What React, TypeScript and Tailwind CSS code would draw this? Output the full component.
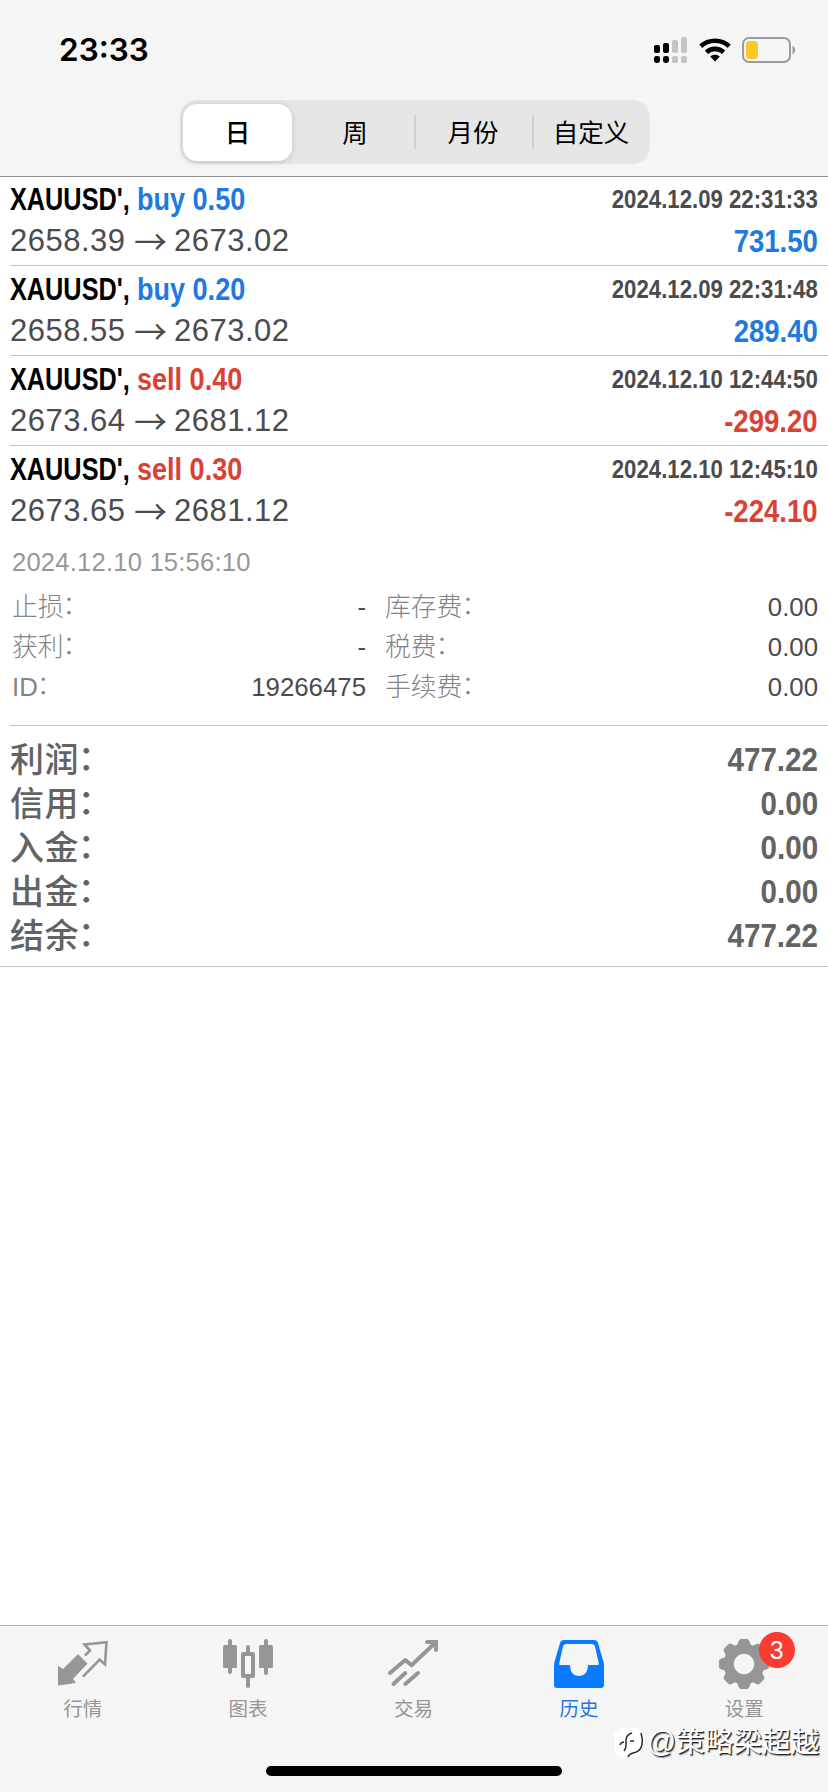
import type { ReactNode } from "react";
import clsx from "clsx";

interface Deal {
  symbol: string;
  side: "buy" | "sell";
  volume: string;
  open: string;
  close: string;
  time: string;
  profit: string;
}

const deals: Deal[] = [
  { symbol: "XAUUSD'", side: "buy", volume: "0.50", open: "2658.39", close: "2673.02", time: "2024.12.09 22:31:33", profit: "731.50" },
  { symbol: "XAUUSD'", side: "buy", volume: "0.20", open: "2658.55", close: "2673.02", time: "2024.12.09 22:31:48", profit: "289.40" },
  { symbol: "XAUUSD'", side: "sell", volume: "0.40", open: "2673.64", close: "2681.12", time: "2024.12.10 12:44:50", profit: "-299.20" },
  { symbol: "XAUUSD'", side: "sell", volume: "0.30", open: "2673.65", close: "2681.12", time: "2024.12.10 12:45:10", profit: "-224.10" }
];

const details = [
  ["止损", "-", "库存费", "0.00"],
  ["获利", "-", "税费", "0.00"],
  ["ID", "19266475", "手续费", "0.00"]
];

const totals = [
  ["利润", "477.22"],
  ["信用", "0.00"],
  ["入金", "0.00"],
  ["出金", "0.00"],
  ["结余", "477.22"]
];

const periods = ["日", "周", "月份", "自定义"];

export default function App() {
  return (
    <div className="flex h-[1792px] w-[828px] flex-col overflow-hidden bg-white font-['Liberation_Sans','Noto_Sans_CJK_SC',sans-serif] text-[#4b4b4d]">
      <header className="h-[177px] shrink-0 border-b border-[#8e8e8e] bg-[#f5f5f5]">
        <StatusBar />
        <Segments />
      </header>

      <main className="-mt-px flex-1">
        {deals.map((deal, i) => (
          <DealRow key={deal.time} deal={deal} last={i === deals.length - 1} />
        ))}
        <DealDetails />
        <section className="h-[241px] border-b border-[#c2c2c4] px-[10px] pt-[11px] text-[#636363]">
          {totals.map(([label, value]) => (
            <div key={label} className="flex h-11 items-center justify-between">
              <span className="mt-[2px] text-[34px] leading-[44px] font-medium tracking-[0.4px]">
                {label}
                <span className="relative -top-[2px] -left-[1px]">：</span>
              </span>
              <span className="origin-right scale-x-[0.87] text-[34px] leading-[44px] font-bold">{value}</span>
            </div>
          ))}
        </section>
      </main>

      <TabBar />
    </div>
  );
}

function StatusBar() {
  return (
    <div className="flex h-[100px] items-center justify-between pr-[32px] pl-[59px]">
      <span className="font-['Inter',sans-serif] text-[31.5px] leading-none font-semibold text-black">23:33</span>
      <div className="mb-[1px] flex items-center">
        <svg className="mr-[11px] h-[28px] w-[34px]" viewBox="0 0 34 28">
          <g fill="#000">
            <rect x="0" y="9" width="6" height="8" rx="2" />
            <rect x="9" y="7" width="6" height="10" rx="2" />
            <rect x="0" y="20" width="6" height="7" rx="2.4" />
            <rect x="9" y="20" width="6" height="7" rx="2.4" />
          </g>
          <g fill="#c4c4c4">
            <rect x="18" y="4" width="6" height="13" rx="2" />
            <rect x="27" y="1" width="6" height="16" rx="2" />
            <rect x="18" y="20" width="6" height="7" rx="2" />
            <rect x="27" y="20" width="6" height="7" rx="2" />
          </g>
        </svg>
        <svg className="mr-[11px] h-[24px] w-[32px]" viewBox="0 0 32 24" fill="none" stroke="#000" strokeWidth="4.6">
          <path d="M1.8 8.2C9.6 .9 22.4 .9 30.2 8.2" />
          <path d="M7.4 14.2c4.8-4.4 12.4-4.4 17.2 0" />
          <path d="M11.2 18.6c2.7-2.4 6.9-2.4 9.6 0L16 23.4z" fill="#000" stroke="none" />
        </svg>
        <svg className="h-[26px] w-[54px]" viewBox="0 0 54 26">
          <rect x="1" y="1" width="47" height="24" rx="6" fill="none" stroke="#9b9b9d" strokeWidth="2" />
          <rect x="4" y="4" width="12" height="18" rx="3.5" fill="#fbc926" />
          <path d="M50.5 9c3.6 1 3.6 7 0 8z" fill="#9b9b9d" />
        </svg>
      </div>
    </div>
  );
}

function Segments() {
  return (
    <div className="ml-[180px] flex h-[64px] w-[470px] items-center rounded-[17px] bg-[#e6e6e6] pl-[3px] font-['Noto_Sans_CJK_SC',sans-serif] text-[25.5px] leading-[34px] text-black">
      {periods.map((period, i) => (
        <div
          key={period}
          className={clsx(
            "flex items-center justify-center pb-[3px]",
            i === 0 && "mr-[4px] h-[57px] w-[109px] rounded-[14px] bg-white font-medium shadow-[0_1px_6px_rgba(0,0,0,0.16)]",
            i > 0 && "h-[34px] w-[118px]",
            i > 1 && "border-l-2 border-[#d0d0d2] pr-[2px]"
          )}
        >
          {period}
        </div>
      ))}
    </div>
  );
}

function DealRow({ deal, last }: { deal: Deal; last: boolean }) {
  const color = deal.side === "buy" ? "text-[#2079de]" : "text-[#db4035]";
  return (
    <div className="pl-[10px]">
      <div className={clsx("h-[90px] pr-[10px]", !last && "border-b border-[#c2c2c4]")}>
        <div className="flex h-[46px] items-center">
          <div className="flex w-[127px] text-[32px] leading-[46px] font-bold text-black">
            <span className="origin-left scale-x-[0.79] whitespace-nowrap">{deal.symbol},</span>
          </div>
          <span className={clsx("origin-left scale-x-[0.845] text-[32px] leading-[46px] font-bold whitespace-nowrap", color)}>
            {deal.side} {deal.volume}
          </span>
          <span className="ml-auto origin-right scale-x-[0.87] text-[25.5px] leading-[46px] font-bold whitespace-nowrap">
            {deal.time}
          </span>
        </div>
        <div className="flex h-[38px] items-center justify-between">
          <div className="flex items-center text-[31px] leading-[38px]">
            <span className="w-[124px] tracking-[0.5px]">{deal.open}</span>
            <span className="mb-[3px] w-[40px] font-['Noto_Sans_CJK_SC'] text-[33px] leading-[34px]">→</span>
            <span className="tracking-[0.5px]">{deal.close}</span>
          </div>
          <span className={clsx("origin-right scale-x-[0.86] text-[32px] leading-[38px] font-bold", color)}>{deal.profit}</span>
        </div>
      </div>
    </div>
  );
}

function DealDetails() {
  return (
    <section className="h-[190px] pl-[10px]">
      <div className="h-[190px] border-b border-[#c2c2c4] pr-[10px] pl-[2px]">
        <p className="h-[51px] pt-[8px] text-[25.6px] leading-[36px] tracking-[0.2px] text-[#97979a]">2024.12.10 15:56:10</p>
        {details.map(([leftLabel, left, rightLabel, right]) => (
          <div key={leftLabel} className="flex h-10 items-center text-[25.8px] leading-10">
            <DetailLabel text={leftLabel} />
            <span className="ml-auto">{left}</span>
            <div className="ml-[19px] w-[200px]">
              <DetailLabel text={rightLabel} />
            </div>
            <span className="w-[233px] text-right">{right}</span>
          </div>
        ))}
      </div>
    </section>
  );
}

function DetailLabel({ text }: { text: string }) {
  return (
    <span className="font-light text-[#838386]">
      {text}
      <span className="relative -top-[2px] -left-[1px]">：</span>
    </span>
  );
}

function TabBar() {
  return (
    <footer className="relative h-[167px] shrink-0 border-t border-[#b4b4b6] bg-[#f5f5f5]">
      <nav className="mr-[1px] grid grid-cols-5 pt-[13px]">
        <Tab label="行情">
          <path
            d="M.5 27.5V46L17.5 43.5 14.5 40 29 24.5 20 15.7 5 30.5z"
            fill="#969698"
            stroke="#969698"
            strokeLinejoin="round"
          />
          <path
            d="M25 37.6 41.7 20.5 47 25.5 48.5 3.2 26.5 5.5 32 11.5 27 16.5"
            fill="none"
            stroke="#969698"
            strokeWidth="2.6"
          />
        </Tab>
        <Tab label="图表">
          <g fill="#969698">
            <rect x="0" y="6" width="14" height="23" rx="1.5" />
            <rect x="5" y="0" width="4" height="35" rx="2" />
            <rect x="36" y="6" width="14" height="23" rx="1.5" />
            <rect x="41" y="0" width="4" height="36" rx="2" />
            <rect x="23" y="6" width="4" height="9" rx="2" />
            <rect x="23" y="37" width="4" height="12" rx="2" />
          </g>
          <rect x="20" y="15" width="10" height="22" fill="none" stroke="#969698" strokeWidth="4" strokeLinejoin="round" />
        </Tab>
        <Tab label="交易">
          <g fill="none" stroke="#969698" strokeWidth="4" strokeLinecap="round">
            <path d="M2 34 17.3 21 23.5 26.2 47 4" strokeLinejoin="round" />
            <path d="M39 3H48V11" />
            <path d="M5.5 45 17.3 34M17.3 45 30 34" />
          </g>
        </Tab>
        <Tab label="历史" active>
          <path
            fill="#0a7aff"
            fillRule="evenodd"
            d="M10 1H40Q43 1 44 4L49.5 23Q50 25 50 27V46Q50 49 47 49H3Q0 49 0 46V27Q0 25 .5 23L6 4Q7 1 10 1ZM12.5 5Q9.5 5 9 7.5L5.2 24.5Q5 26 6.5 26H15.3Q16.3 26 16.3 28C16.3 40 33.7 40 33.7 28Q33.7 26 34.7 26H43.5Q45 26 44.8 24.5L41 7.5Q40.5 5 37.5 5Z"
          />
        </Tab>
        <Tab label="设置" badge="3">
          <g fill="#969698">
            {[0, 45, 90, 135].map((angle) => (
              <path
                key={angle}
                transform={`rotate(${angle} 25 25)`}
                d="M22 0H28Q29.5 0 30 1.5L32.5 8H17.5L20 1.5Q20.5 0 22 0ZM17.5 42H32.5L30 48.5Q29.5 50 28 50H22Q20.5 50 20 48.5Z"
              />
            ))}
          </g>
          <circle cx="25" cy="25" r="15.3" fill="none" stroke="#969698" strokeWidth="10" />
        </Tab>
      </nav>

      <div className="absolute top-[140px] left-[266px] h-[10px] w-[296px] rounded-full bg-black" />
      <Watermark />
    </footer>
  );
}

function Tab({
  label,
  active,
  badge,
  children
}: {
  label: string;
  active?: boolean;
  badge?: string;
  children: ReactNode;
}) {
  return (
    <div className="relative flex flex-col items-center">
      <svg className="h-[50px] w-[50px]" viewBox="0 0 50 50">
        {children}
      </svg>
      <span className={clsx("mt-[6px] text-[19.5px] leading-[28px]", active ? "text-[#1f79e0]" : "text-[#969698]")}>
        {label}
      </span>
      {badge && (
        <span className="absolute -top-[7px] left-[97px] grid h-9 w-9 place-items-center rounded-full bg-[#fb3b30] text-[25px] leading-none text-white">
          {badge}
        </span>
      )}
    </div>
  );
}

function Watermark() {
  return (
    <div className="absolute top-[96px] left-[614px] flex items-center text-white">
      <svg className="h-[36px] w-[32px]" viewBox="0 0 32 36">
        <rect x="0" y="4" width="28" height="29" rx="8" fill="#fff" />
        <path
          d="M6 21q1-3 4-3M10 27q2-2 2-6v-5q0-5 6-7M16 17h4M27 9q2 6 1 12-2 7-9 8-4 1-5 4"
          fill="none"
          stroke="#2b2b2b"
          strokeWidth="1.5"
        />
      </svg>
      <span className="ml-[1px] text-[28.7px] leading-[40px] whitespace-nowrap [text-shadow:1px_1px_0_#2b2b2b,1.5px_1.5px_1px_#888]">
        @策略梁超越
      </span>
    </div>
  );
}
